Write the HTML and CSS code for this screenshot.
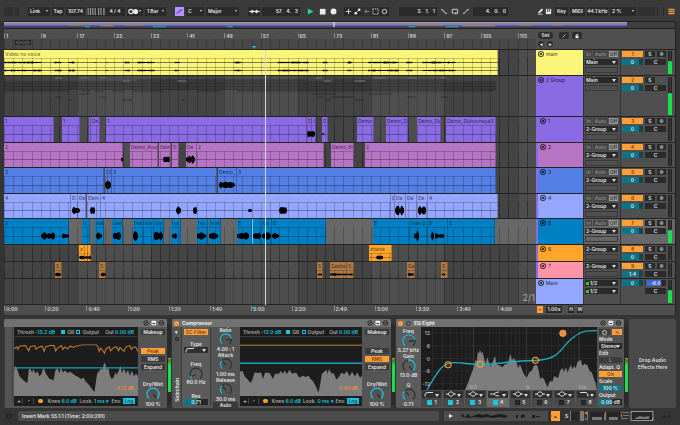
FILE: index.html
```
<!DOCTYPE html>
<html lang="en">
<head>
<meta charset="utf-8">
<title>Arrangement</title>
<link rel="stylesheet" href="styles.css">
</head>
<body>
<svg class="defs" width="0" height="0" aria-hidden="true">
  <symbol id="knob-high" viewBox="0 0 14 14"><path class="ring" d="M3 11.5A6 6 0 1 1 11 11.5"/><path class="arc" d="M3 11.5A6 6 0 1 1 12.8 6"/><path class="hand" d="M7 7.5L12 6.5"/></symbol>
  <symbol id="knob-full" viewBox="0 0 14 14"><path class="arc" d="M3 11.5A6 6 0 1 1 11 11.5"/><path class="hand" d="M7 7L10.5 11"/></symbol>
  <symbol id="knob-low" viewBox="0 0 14 14"><path class="ring" d="M3 11.5A6 6 0 1 1 11 11.5"/><path class="arc" d="M3 11.5A6 6 0 0 1 1.5 9"/><path class="hand" d="M7 7.5L2.5 9.5"/></symbol>
  <symbol id="knob-mid" viewBox="0 0 14 14"><path class="ring" d="M3 11.5A6 6 0 1 1 11 11.5"/><path class="arc" d="M3 11.5A6 6 0 0 1 2.5 3"/><path class="hand" d="M7 7.5L3.5 4"/></symbol>
  <symbol id="knob-bi" viewBox="0 0 14 14"><path class="ring" d="M3 11.5A6 6 0 1 1 11 11.5"/><path class="arc" d="M7 1A6 6 0 0 1 11 11.5"/><path class="hand" d="M7 7.5L10.5 11"/><circle class="dot" cx="7" cy="1" r="1"/></symbol>
  <symbol id="bell" viewBox="0 0 10 6"><path d="M0 3H2M8 3H10M2 3Q5-1.5 8 3Q5 7.5 2 3Z"/></symbol>
  <symbol id="lowcut" viewBox="0 0 10 6"><path d="M1 5.5V4Q1 1.5 4 1.5H9"/></symbol>
  <symbol id="shelf" viewBox="0 0 10 6"><path d="M0 3H4Q5 1 9 1M4 3Q5 5 9 5"/></symbol>
  <symbol id="highcut" viewBox="0 0 10 6"><path d="M1 1.5H7Q9 1.5 9 5.5"/></symbol>
  <symbol id="dev-icons" viewBox="0 0 22 6"><circle class="o" cx="3" cy="3" r="2.2"/><path class="o" d="M1.5 4.5L4.5 1.5"/><rect class="f" x="8.5" y=".7" width="4.6" height="4.6" rx="1"/><path class="o" d="M9.5 3.5H12"/><circle class="o" cx="18.5" cy="3" r="2.3"/><path class="o" d="M17 3H20"/></symbol>
</svg>

<header class="toolbar">
  <div class="group g-mode"><span class="dim-box"></span><span class="dim-dot"></span></div>
  <div class="group g-clock">
    <span class="drop"><select aria-label="Link"><option>Link</option></select></span>
    <button>Tap</button>
    <input aria-label="Tempo" value="107.74">
    <button aria-label="Nudge"><svg viewBox="0 0 16 6"><path class="bars" d="M1 0V6M3 0V6M5 0V6M7 0V6M10 0V6M12 0V6M14.5 0V6"/></svg></button>
    <input aria-label="Time signature" value="4 / 4">
    <button class="with-arrow" aria-label="Metronome"><svg viewBox="0 0 9 6"><circle class="line" cx="2.5" cy="3" r="1.8"/><circle class="fill" cx="6.5" cy="3" r="2.2"/></svg></button>
    <span class="drop"><select aria-label="Quantize"><option>1 Bar</option></select></span>
  </div>
  <div class="group g-scale">
    <button class="scale" aria-label="Scale"><svg viewBox="0 0 9 9"><path d="M1.5 7V5.5H4M4.5 5V3H6.5M7 4V2"/></svg></button>
    <span class="drop"><select aria-label="Root"><option>C</option></select></span>
    <span class="drop"><select aria-label="Scale name"><option>Major</option></select></span>
  </div>
  <div class="group g-pos">
    <button aria-label="Follow"><svg viewBox="0 0 11 6"><path class="line" d="M1 3H10"/><path class="fill" d="M3 1L5.5 3L3 5ZM8 1L5.5 3L8 5Z"/></svg></button>
    <input class="num" aria-label="Position" value="57.   4.   3">
  </div>
  <div class="group g-transport">
    <button class="bare play" aria-label="Play"><svg viewBox="0 0 8 8"><path d="M1 .5L7.5 4L1 7.5Z"/></svg></button>
    <button class="bare" aria-label="Stop"><svg viewBox="0 0 8 8"><path class="fill" d="M1 1H7.5V7.5H1Z"/></svg></button>
    <button class="bare" aria-label="Record"><svg viewBox="0 0 8 8"><circle class="fill" cx="4" cy="4" r="3.4"/></svg></button>
  </div>
  <div class="group g-edit">
    <button aria-label="Overdub"><svg viewBox="0 0 8 8"><path class="line" d="M4 1V7M1 4H7"/></svg></button>
    <button aria-label="Automation arm"><svg viewBox="0 0 8 8"><path class="line" d="M2 6L6 2"/><circle class="fill" cx="2" cy="6" r="1.5"/><circle class="fill" cx="6" cy="2" r="1.5"/></svg></button>
    <button class="dim" aria-label="Re-enable"><svg viewBox="0 0 8 8"><path class="line" d="M7 4H2M4 2L2 4L4 6"/></svg></button>
    <button aria-label="Capture"><svg viewBox="0 0 8 8"><path class="line" stroke-dasharray="1.5 1" d="M1 1H7V7H1Z"/></svg></button>
    <button aria-label="Session record"><svg viewBox="0 0 8 8"><circle class="line" cx="4" cy="4" r="2.5"/></svg></button>
  </div>
  <div class="group g-loop">
    <input class="num" aria-label="Loop start" value="3.   1.   1">
    <div class="icons">
      <button aria-label="Punch in"><svg viewBox="0 0 9 8"><path class="line" d="M1 2H3L6 6H8"/></svg></button>
      <button aria-label="Loop"><svg viewBox="0 0 9 8"><path class="line" d="M3 6H1.5V1.5H7.5V6H5M5.5 4.5L4 6L5.5 7.5"/></svg></button>
      <button aria-label="Punch out"><svg viewBox="0 0 9 8"><path class="line" d="M1 6H3L6 2H8"/></svg></button>
    </div>
    <input class="num" aria-label="Loop length" value="4.   0.   0">
  </div>
  <div class="group g-right">
    <div class="icons">
      <button aria-label="Draw"><svg viewBox="0 0 8 8"><path class="fill" d="M1.5 4.5L5.5 .5L7 2L3.5 5.5L1.5 6Z"/><path class="line" d="M1 7H6"/></svg></button>
      <button aria-label="Keyboard"><svg viewBox="0 0 8 8"><path class="fill" d="M1 1H7V7H1Z"/><path class="cut" d="M3 1V4.5M5 1V4.5"/></svg></button>
    </div>
    <button>Key</button>
    <button>MIDI</button>
    <button>44.1 kHz</button>
    <span class="drop"><select aria-label="CPU"><option>2 %</option></select></span>
    <span class="dim-box"></span>
    <span class="ticks"></span>
    <button class="bare menu" aria-label="Menu"><svg viewBox="0 0 8 8"><path d="M.5 1.5H7.5M.5 4H7.5M.5 6.5H7.5"/></svg></button>
  </div>
</header>

<main class="arrangement">
  <div class="overview">
    <svg viewBox="0 0 672 7" preserveAspectRatio="none" aria-hidden="true">
      <path fill="#e6e04a" d="M0 0H624V1H0Z"/><path fill="#8379d8" d="M0 1H624V4H0Z"/><path fill="#4670c4" d="M0 4H624V5H0Z"/>
      <path fill="#ae7f62" d="M64 3H80V4H64ZM120 3H140V4H120ZM410 3H440V4H410ZM515 3H530V4H515ZM550 3H560V4H550Z"/>
      <path fill="#e98d33" d="M96 4H110V5H96ZM458 4H492V5H458Z"/>
      <path fill="#28b98a" d="M81 5H86V6H81ZM149 5H162V6H149ZM223 5H229V6H223ZM405 5H412V6H405ZM442 5H455V6H442Z"/>
      <path fill="#fff" d="M330 0H331V6H330Z"/>
    </svg>
  </div>
  <div class="ruler-row">
    <div class="ruler">
      <div class="bars-scale" id="bars"></div>
      <div class="scrub"><span class="brace"></span><span class="marker"></span></div>
    </div>
    <div class="locators">
      <div><button class="set">Set</button><button aria-label="Draw mode"><svg viewBox="0 0 8 8"><path class="line" d="M2 6L6 2"/></svg></button><button aria-label="Lock"><svg viewBox="0 0 8 8"><path class="fill" d="M2 3.5H6V7H2Z"/><path class="line" d="M3 3.5V2H5V3.5"/></svg></button></div>
      <div><button class="round" aria-label="Previous">◂</button><button class="round" aria-label="Next">▸</button></div>
    </div>
  </div>
  <div class="tracks" id="tracks"><span class="playhead"></span></div>
  <div class="time-row">
    <div class="time-scale" id="times"><span class="marker"></span></div>
    <div class="zoom"><button class="on" aria-label="Automation">+</button><button class="speed">1.00x</button><button>H</button><button>W</button></div>
  </div>
</main>

<section class="devices">
  <article class="device comp first">
    <h2 class="title"><svg class="dev-icons"><use href="#dev-icons"/></svg></h2>
    <div class="body">
      <div class="sliver"></div>
      <div class="screen">
        <div class="readout"><span>Thresh <b>-15.2 dB</b></span><span><i class="sq"></i>GR <i class="sq open"></i>Output</span><span>Out <b>0.00 dB</b></span></div>
        <div class="plot">
          <svg viewBox="0 0 370 180" preserveAspectRatio="none" aria-hidden="true">
            <path class="wave" d="M0 180V105L4 88 10 100 16 118 24 128 32 135 40 140 44 100 48 95 54 108 58 98 64 112 70 104 76 120 82 112 88 92 94 108 100 120 106 128 112 130 118 132 124 100 130 96 136 110 140 92 146 108 152 102 160 110 168 106 176 112 184 118 192 122 200 128 208 124 214 136 220 142 228 152 234 160 240 168 244 140 248 112 254 104 260 96 264 100 268 82 272 78 276 100 282 94 286 118 292 128 298 122 302 108 306 116 312 104 318 88 322 110 328 96 334 112 340 100 346 118 352 102 358 120 364 112 370 118V180Z"/>
            <path class="gr" d="M0 36L8 30 12 38 16 28 34 26 44 42 48 30 62 26 66 38 72 32 84 28 90 44 94 30 108 26 120 26 124 42 130 34 142 26 146 38 152 30 160 36 168 28 178 32 184 28 206 24H246L250 28 254 44 258 34 264 40 270 50 274 36 284 30 288 42 298 32 306 30 312 42 316 32 322 38 328 44 334 30 346 26 350 38 358 30 364 32 370 44"/>
            <path class="thr" d="M0 94H370"/>
          </svg>
          <span class="gain">-3.12 dB</span>
        </div>
        <div class="foot"><span class="mini">⏶</span><span class="mini">◜</span><span class="mini on"></span><span>Knee <b>6.0 dB</b></span><span>Look. <b>1 ms ▾</b></span><span>Env. <button class="log">Log</button></span></div>
      </div>
      <div class="modes"><button>Makeup</button><button class="on gap">Peak</button><button>RMS</button><button>Expand</button><label>Dry/Wet</label><svg class="knob"><use href="#knob-full"/></svg><output>100 %</output></div>
    </div>
  </article>
  <div class="dmeter"><i></i></div>
  <article class="device comp second">
    <h2 class="title"><i class="power"></i>Compressor<svg class="dev-icons"><use href="#dev-icons"/></svg></h2>
    <div class="body">
      <div class="side"><span>▾</span><span class="ring-btn"></span><em>Sidechain</em></div>
      <div class="filter"><button class="on">SC Filter</button><label for="ftype">Type</label><span class="drop"><svg class="fshape"><use href="#lowcut"/></svg><select id="ftype" aria-label="Type"><option></option></select></span><label>Freq</label><svg class="knob"><use href="#knob-low"/></svg><output>80.0 Hz</output><label class="res">Res</label><input class="bar" aria-label="Res" value="0.71"></div>
      <div class="params"><label>Ratio</label><svg class="knob"><use href="#knob-high"/></svg><output>4.00 : 1</output><label>Attack</label><svg class="knob"><use href="#knob-mid"/></svg><output>1.00 ms</output><label>Release</label><svg class="knob"><use href="#knob-mid"/></svg><output>30.0 ms</output><button>Auto</button></div>
      <div class="screen">
        <div class="readout"><span>Thresh <b>-12.0 dB</b></span><span><i class="sq"></i>GR <i class="sq open"></i>Output</span><span>Out <b>0.00 dB</b></span></div>
        <div class="plot">
          <svg viewBox="0 0 370 180" preserveAspectRatio="none" aria-hidden="true">
            <path class="wave" d="M0 180V105L8 104 14 120 22 128 32 140 38 130 44 108 56 110 64 108 70 128 76 108 90 110 100 128 106 112 118 112 124 104 130 112 136 102 142 114 150 100 158 112 170 108 180 124 190 118 200 122 208 118 214 128 222 136 230 150 238 170 244 140 248 112 256 106 262 100 266 112 270 98 278 112 284 110 292 130 300 122 308 108 316 114 324 104 332 120 340 106 348 120 356 108 364 124 370 118V180Z"/>
            <path class="gr" d="M0 25H370"/>
            <path class="thr" d="M0 80H370"/>
          </svg>
          <span class="gain">0.00 dB</span>
        </div>
        <div class="foot"><span class="mini">⏶</span><span class="mini">◜</span><span class="mini on"></span><span>Knee <b>6.0 dB</b></span><span>Look. <b>0 ms ▾</b></span><span>Env. <button class="log">Log</button></span></div>
      </div>
      <div class="modes"><button>Makeup</button><button class="gap">Peak</button><button class="on">RMS</button><button>Expand</button><label>Dry/Wet</label><svg class="knob"><use href="#knob-full"/></svg><output>100 %</output></div>
    </div>
  </article>
  <div class="dmeter"><i></i></div>
  <article class="device eq">
    <h2 class="title"><i class="power"></i><i class="fold"></i>EQ Eight<svg class="dev-icons"><use href="#dev-icons"/></svg></h2>
    <div class="body">
      <div class="params"><label>Freq</label><svg class="knob"><use href="#knob-high"/></svg><output>5.27 kHz</output><label>Gain</label><svg class="knob"><use href="#knob-bi"/></svg><output>13.0 dB</output><label>Q</label><svg class="knob"><use href="#knob-mid"/></svg><output>0.71</output></div>
      <div class="eq-main">
        <div class="eq-plot">
          <svg viewBox="0 0 526 188" preserveAspectRatio="none" aria-hidden="true">
            <path class="grid" d="M0 18H526M0 56H526M0 94H526M0 131H526M0 169H526M34 0V188M65 0V188M89 0V188M107 0V188M122 0V188M135 0V188M146 0V188M205 0V188M234 0V188M255 0V188M270 0V188M283 0V188M294 0V188M362 0V188M390 0V188M410 0V188M426 0V188M439 0V188M450 0V188M459 0V188"/>
            <path class="grid strong" d="M157 0V188M315 0V188M472 0V188"/>
            <path class="wave" d="M131 188L140 168 150 140 157 122 163 98 167 102 170 72 173 80 176 67 180 78 184 74 188 92 193 110 198 90 203 106 208 118 214 104 221 86 226 112 234 114 243 120 250 112 260 108 264 92 268 80 271 98 278 94 286 106 290 122 296 112 306 138 316 152 323 136 332 130 336 118 343 112 348 116 352 132 356 156 362 150 368 156 372 166 378 180 386 160 392 164 398 146 410 152 416 130 423 122 427 134 433 120 438 136 448 112 452 126 458 116 462 124 468 104 478 98 482 116 490 110 498 116 504 132 510 134 516 152 522 168 526 188Z"/>
            <path class="curve" d="M18 188C48 136 62 110 90 107C120 104 140 112 178 112C240 112 260 100 341 100C420 98 418 56 454 32C474 13 490 11 526 11"/>
            <g class="nodes"><circle cx="81" cy="113" r="9"/><circle cx="177" cy="111" r="9"/><circle cx="342" cy="99" r="9"/><circle class="solid" cx="424" cy="19" r="9"/></g>
          </svg>
          <div class="db"><span>12</span><span>6</span><span>0</span><span>-6</span><span>-12</span></div>
          <div class="hz"><span>100</span><span>1k</span><span>10k</span></div>
        </div>
        <div class="bands" id="bands"></div>
      </div>
      <div class="eq-opts"><div class="pair"><button aria-label="Audition"><i class="o-ring"></i></button><button class="on" aria-label="Analyze">∿</button></div><label for="mode">Mode</label><span class="drop"><select id="mode"><option>Stereo</option></select></span><label>Edit</label><button class="off">L</button><label>Adapt. Q</label><button class="on">On</button><label for="scale">Scale</label><input id="scale" class="bar full" value="100 %"><label for="out">Output</label><input id="out" class="bar" value="0.00 dB"></div>
    </div>
  </article>
  <div class="dmeter"><i></i></div>
  <div class="dropzone"><p>Drop Audio Effects Here</p></div>
</section>

<footer class="status">
  <span class="info">i</span>
  <p>Insert Mark 55.1.1 (Time: 2:00:291)</p>
  <div class="clipview"><svg viewBox="0 0 104 10" preserveAspectRatio="none" aria-hidden="true"><path class="fill" d="M5 3L9 5L5 7Z"/><path class="thumb" d="M17 5L19 3 21 6 24 3 27 6 31 4 35 3 39 4 43 3 47 5 51 4 56 3 61 4 64 5 61 7 55 6 49 7 43 6 37 7 31 6 25 7 19 6ZM72 4H74V7H72ZM77 4L80 3 81 6 77 7ZM88 4H91V7H88ZM92 5H96V6H92Z"/></svg></div>
  <button class="hot" aria-label="Track devices">▴</button>
  <span class="solo">S</span>
  <svg class="chain" viewBox="0 0 84 10" aria-hidden="true"><path fill="#262626" d="M1 1H9V9H1ZM20 1H34V9H20ZM37 1H50V9H37ZM62 1H82V9H62Z"/><path fill="#777" d="M0 0H1V10H0ZM10 0H14V10H10ZM17 0H18V10H17ZM34 3H36V9H34ZM51 1H59V2H51ZM53 4H59V5H53ZM51 7H58V8H51ZM22 6H32V9H22ZM39 6H48V9H39ZM65 7L70 5 74 6 79 5V8H65Z"/><path fill="#dc7c35" d="M12 2H13V4H12ZM15 1H17V3H15ZM15 7H16V9H15ZM35 1H36V3H35ZM51 3H52V6H51ZM82 7H83V9H82Z"/><path fill="none" stroke="#ddd" stroke-width=".6" d="M61 .5H83V9.5H61Z"/></svg>
  <span class="tail">▪▸ ▾</span>
</footer>
<script src="app.js"></script>
</body>
</html>
```

FILE: styles.css
```
* { box-sizing: border-box; }

:root {
  --text: #e4e4e4;
  --orange: #ff9f38;
  --cyan: #1cc3dc;
  --teal: #0a7488;
  --field: #2a2a2a;
  --panel: #4f4f4f;
}

body {
  margin: 0;
  background: #343434;
  color: var(--text);
  font: 600 5px/6px Inter, "Liberation Sans", sans-serif;
}

button, input, select {
  margin: 0;
  padding: 0;
  border: 0;
  border-radius: 0;
  min-width: 0;
  font: inherit;
  color: inherit;
  background: var(--field);
  appearance: none;
}

button { text-align: center; white-space: nowrap; }
input { width: 100%; text-align: center; }
svg { display: block; }
.defs { position: absolute; }
.line { fill: none; stroke: var(--text); }
.fill { fill: #eaeaea; }

/* Drop-downs */
.drop { position: relative; display: block; background: var(--field); }
.drop select { display: block; width: 100%; height: 100%; padding-left: 2px; background: none; }
.drop::after, .with-arrow::after {
  content: "";
  position: absolute;
  right: 2px;
  top: 50%;
  margin-top: -1px;
  border: 2px solid transparent;
  border-top: 3px solid #ddd;
  border-bottom: 0;
  pointer-events: none;
}

/* Toolbar */
.toolbar { display: flex; height: 21px; padding: 1px 4px 0; align-items: center; background: #3a3a3a; }
.group { display: grid; gap: 2px; height: 9px; }
.group > * { height: 9px; }
.toolbar svg { height: 7px; margin: auto; }
.g-mode { grid-template-columns: 9px 4px; width: 24px; }
.dim-box, .dim-dot { background: #303030; }
.g-clock { grid-template-columns: 22px 12px 19px 16px 20px 16px 21px; }
.g-scale { grid-template-columns: 9px 18px 33px; margin-left: 9px; }
.g-pos { grid-template-columns: 12px 38px; margin-left: 9px; }
.g-transport { grid-template-columns: 9px 10px 9px; margin-left: 6px; }
.g-edit { grid-template-columns: repeat(5, 9px); gap: 0; margin-left: 6px; }
.g-loop { grid-template-columns: 38px 32px 35px; margin-left: 10px; }
.g-right { grid-template-columns: 17px 13px 15px 21px 26px 17px 7px 10px; margin-left: auto; }
.toolbar .drop::after, .toolbar .with-arrow::after { border-width: 2px 1px 0; }
.with-arrow { position: relative; }
.toolbar .with-arrow svg { margin: 0 1px; }
.icons { display: flex; justify-content: space-around; }
.icons button { flex: 1; background: none; }
.g-edit button { background: var(--field); }
.dim { opacity: .5; }
.num { white-space: pre; text-align: right; padding-right: 2px; }
.bars { stroke: #9a9a9a; stroke-width: 1; }
.scale { background: #b295ff; }
.scale path { fill: none; stroke: #3c2a70; }
.bare { background: none; }
.play path { fill: #1fd58c; }
.cut { stroke: #333; }
.ticks { border: 1px solid #2a2a2a; border-width: 0 1px; }
.menu path { stroke: var(--orange); stroke-width: 1.5; }

/* Arrangement */
.arrangement { margin: 0 4px; background: var(--panel); border-right: 1px solid #222; border-radius: 2px; }
.overview { height: 8px; background: #3f3f3f; border: 1px solid #1f1f1f; border-width: 1px 0; }
.overview svg { width: 100%; height: 6px; }
.ruler-row, .time-row { display: grid; grid-template-columns: minmax(0, 1fr) 139px; }
.ruler-row { height: 21px; border-bottom: 1px solid #222; }
.bars-scale { display: grid; grid-template-columns: repeat(14, 4fr) 2fr; height: 10px; padding-top: 4px; }
.bars-scale span, .time-scale span:not(.marker) { border-left: 1px solid #8a8a8a; height: 5px; padding-left: 1px; color: #d4d4d4; }
.scrub {
  position: relative;
  height: 10px;
  background: repeating-linear-gradient(to right, #3b3b3b 0 1px, transparent 1px calc(100% / 58)), #484848;
}
.brace { position: absolute; left: 2%; top: 1px; width: 3%; height: 5px; border: 1px dashed #222; }
.marker { position: absolute; left: 46.6%; bottom: 0; border: 2px solid transparent; border-top: 3px solid var(--cyan); border-bottom: 0; }
.locators { padding: 3px 0 0 2px; }
.locators div { display: flex; gap: 3px; height: 9px; }
.locators button { width: 10px; height: 7px; border-radius: 2px; background: #2e2e2e; line-height: 7px; }
.locators svg { height: 6px; margin: auto; }
.locators .set { width: 15px; margin-right: 3px; border-radius: 4px; }
.locators .round { width: 6px; height: 6px; border-radius: 3px; line-height: 6px; }

.tracks { position: relative; }
.track {
  display: grid;
  grid-template-columns: minmax(0, 1fr) 47px 37px 47px 8px;
  border-bottom: 1px solid #232323;
}
.lane {
  position: relative;
  overflow: hidden;
  background:
    repeating-linear-gradient(to right, rgba(0, 0, 0, .2) 0 1px, transparent 1px calc(100% / 58)),
    repeating-linear-gradient(to right, #444 0 calc(100% * 8 / 58), #4e4e4e calc(100% * 8 / 58) calc(100% * 16 / 58));
}
.track.selected .lane { background: #676767; }
.track.selected { background: #676767; }
.clip {
  position: absolute;
  top: 0;
  bottom: 0;
  overflow: hidden;
  padding-left: 1px;
  line-height: 8px;
  font-weight: 500;
  white-space: nowrap;
  color: rgba(0, 0, 0, .6);
  border-right: 1px solid rgba(0, 0, 0, .25);
}
.clip::after {
  content: "";
  position: absolute;
  inset: 8px 0 0;
  border-top: 1px solid rgba(0, 0, 0, .2);
  background: linear-gradient(rgba(0, 0, 0, .3), rgba(0, 0, 0, .3)) center / 100% 1px no-repeat;
}
.lane-grid {
  position: absolute;
  inset: 8px 0 0;
  background: repeating-linear-gradient(to right, rgba(0, 0, 0, .2) 0 1px, transparent 1px calc(100% / 58));
}
.waves { position: absolute; inset: 0; width: 100%; height: 100%; }
.playhead { position: absolute; z-index: 2; top: 0; bottom: 0; left: 38.9%; width: 1px; background: #d6d6d6; }
.insert { position: absolute; top: 0; bottom: 0; left: 46.7%; width: 1px; background: #7cc8ea; }
.corner { position: absolute; right: 1px; bottom: 2px; font-size: 9px; line-height: 8px; font-weight: 400; color: #aaa; }

.c-yellow { background: #fbf679; }
.c-purple { background: #8b6be4; }
.c-pink { background: #b674c5; }
.c-blue { background: #5480e6; }
.c-peri { background: #95a6ff; }
.c-sea { background: #0080c4; }
.c-amber { background: #ffa529; }
.c-brown { background: #ad7a46; }
.c-rose { background: #ff94a8; }

.head { display: flex; gap: 2px; padding: 1px 2px 0; color: rgba(0, 0, 0, .72); font-weight: 500; white-space: nowrap; }
.child .head { border-left: 2px solid #8b6be4; }
.fold-btn { width: 6px; height: 6px; border: 1px solid rgba(0, 0, 0, .7); border-radius: 3px; background: radial-gradient(rgba(0, 0, 0, .7) 1px, transparent 1px); }
.io, .mix { display: grid; align-content: start; gap: 2px; padding: 1px 2px 0 1px; border-left: 1px solid #333; }
.io > * { height: 6px; }
.monitor { display: grid; grid-template-columns: 7px 1fr 9px; gap: 1px; }
.monitor button { background: #454545; color: #888; }
.monitor .sel { background: #999; color: #333; }
.io .drop select { padding-left: 1px; }
.io .blank { border: 1px solid #3a3a3a; }
.io .lit select { padding-left: 5px; }
.io .lit::before { content: ""; position: absolute; left: 1px; top: 2px; width: 3px; height: 3px; background: #43c02f; }
.mix { grid-template-columns: 21px 10px 9px; gap: 2px 2px; padding-right: 0; }
.mix > * { height: 6px; }
.mix .act { background: var(--orange); color: #70401a; }
.mix .rec { color: #888; }
.mix .pan { grid-column: 2 / 4; }
.mix .vol { background: linear-gradient(to right, var(--teal) 80%, #20424a 80%); }
.mix .cue { background: linear-gradient(to right, #2a2a2a 5%, #3c68d0 5% 75%, #2a2a2a 75%); }
.mix .second { grid-column: 2 / 4; }
.meter { position: relative; display: flex; align-items: flex-end; width: 4px; margin: 1px 0 1px 1px; background: linear-gradient(to right, #252525 1px, #333 1px 3px, #252525 3px); }
.meter i { width: 100%; background: #1be04b; border-top: 1px solid #1ba6a0; }

.time-row { height: 10px; }
.time-scale { position: relative; display: grid; grid-template-columns: repeat(12, 412fr) 376fr; padding-top: 1px; }
.time-scale .marker { bottom: 5px; }
.zoom { display: flex; gap: 3px; padding: 1px; }
.zoom button { width: 6px; height: 7px; line-height: 7px; }
.zoom .speed { width: 16px; margin-right: 3px; }

.on, .zoom .on { background: var(--orange); color: #75431a; }

/* Devices */
.devices { display: flex; height: 89px; margin: 4px 4px 0; }
.device { background: #545454; border-radius: 2px; overflow: hidden; display: flex; flex-direction: column; }
.comp.first { flex: 163 0 0; }
.comp.second { flex: 219 0 0; }
.eq { flex: 228 0 0; }
.device .title { display: flex; align-items: center; gap: 3px; height: 8px; margin: 0; padding: 0 2px; background: #717171; font-size: 5px; color: #eee; flex: none; }
.dev-icons { width: 22px; height: 6px; margin-left: auto; }
.dev-icons .o, .o { fill: none; stroke: #2a2a2a; }
.f { fill: #eee; }
.power { width: 5px; height: 5px; border-radius: 3px; background: var(--orange); }
.fold { width: 5px; height: 5px; border: 1px solid #333; border-radius: 3px; }
.body { display: flex; flex: 1; min-height: 0; padding-bottom: 2px; }
.sliver { width: 10px; background: linear-gradient(to right, #3c3c3c 1px, transparent 1px 8px, #444 8px 9px, transparent 9px); }
.screen { flex: 1; display: flex; flex-direction: column; background: #1d1d1d; color: #a5a5a5; min-width: 0; }
.screen b { color: var(--cyan); font-weight: 600; }
.readout, .foot { display: flex; justify-content: space-between; align-items: center; height: 10px; padding: 0 4px 0 3px; white-space: nowrap; }
.readout { border-bottom: 1px solid #383838; }
.foot { gap: 1px; padding: 0 3px 0 1px; }
.mini { width: 8px; text-align: center; border-right: 1px solid #444; }
.mini.on { height: 4px; width: 5px; margin: 0 2px; border: 0; border-radius: 2px; }
.sq { display: inline-block; width: 4px; height: 4px; margin: 0 2px 0 0; background: var(--cyan); }
.sq.open { background: none; border: 1px solid var(--cyan); margin-left: 1px; }
.log { width: 12px; background: var(--cyan); color: #154c58; }
.plot { position: relative; flex: 1; min-height: 0; }
.plot svg, .eq-plot svg { position: absolute; inset: 0; width: 100%; height: 100%; }
.wave { fill: #7d7d7d; }
.gr { fill: none; stroke: #cc7d34; stroke-width: 3; }
.thr { fill: none; stroke: #199fb3; stroke-width: 4; }
.gain { position: absolute; right: 4px; bottom: 5px; color: #e08d3d; }
.modes { display: flex; flex-direction: column; align-items: center; gap: 2px; width: 29px; padding: 2px 2px 0 3px; }
.modes button { width: 100%; height: 6px; background: #3a3a3a; }
.modes button.on { background: var(--orange); }
.modes .gap { margin-top: 11px; }
.modes label { margin-top: 9px; }
.modes .knob, .modes output, .modes label { margin-bottom: -2px; white-space: nowrap; }
.knob { width: 14px; height: 14px; flex: none; }
.ring, .arc, .hand { fill: none; stroke: #303030; stroke-width: 1.3; }
.arc { stroke: var(--cyan); }
.dot { fill: var(--cyan); }
.dmeter { width: 4px; margin: 5px 1px 3px 0; padding: 0 0 13px 1px; background: #2a2a2a; display: flex; align-items: flex-end; }
.dmeter i { width: 100%; height: 50%; background: linear-gradient(#3b8a2a 3px, #1be04b 6px); border-top: 1px solid #b78b2f; }

.side { display: flex; flex-direction: column; align-items: center; width: 10px; gap: 2px; padding-top: 2px; border-right: 1px solid #3c3c3c; }
.ring-btn { width: 4px; height: 4px; border: 1px solid #222; border-radius: 2px; }
.side em { margin-top: auto; padding: 4px 0; writing-mode: vertical-rl; transform: rotate(180deg); font-style: normal; }
.filter, .params { display: flex; flex-direction: column; align-items: center; padding: 1px 2px 0; white-space: nowrap; }
.filter { width: 29px; border-right: 1px solid #3c3c3c; background: #5c5c5c; }
.filter > button { width: 100%; height: 6px; margin: 1px 0 6px; }
.filter .drop { width: 100%; height: 6px; margin: 0 0 8px; background: #303030; }
.fshape { position: absolute; left: 1px; top: 0; width: 10px; height: 6px; fill: none; stroke: #ddd; }
.filter .knob { margin: 0 0 -2px; }
.filter .res { margin-top: 8px; }
.bar { height: 6px; background: linear-gradient(to right, var(--teal) 55%, #262626 55%); }
.bar.full { background: var(--teal); }
.second .params { width: 29px; padding-top: 0; }
.second .params .knob { height: 13px; }
.second .params button { width: 100%; background: #3a3a3a; }

.eq .params { width: 25px; padding: 1px 1px 0; background: #5c5c5c; }
.eq .params .knob { margin: 0 0 -1px; }
.eq .params output:nth-of-type(2) { margin-bottom: 4px; }
.eq-main { flex: 1; display: flex; flex-direction: column; min-width: 0; }
.eq-plot { position: relative; flex: 1; background: #1d1d1d; }
.grid { fill: none; stroke: #303030; stroke-width: 2; }
.strong { stroke: #484848; }
.curve { fill: none; stroke: #20aabb; stroke-width: 4; }
.nodes circle { fill: rgba(255, 159, 56, .1); stroke: var(--orange); stroke-width: 3; }
.nodes .solid { fill: #e29040; }
.db { position: absolute; inset: 3px auto 3px 1px; width: 8px; display: flex; flex-direction: column; justify-content: space-between; text-align: right; color: #bbb; font-weight: 500; }
.hz { position: absolute; left: 27%; right: 6%; bottom: 0; display: flex; justify-content: space-between; color: #aaa; font-weight: 500; }
.bands { display: grid; grid-template-columns: repeat(8, 1fr); gap: 1px; height: 16px; }
.band { padding: 1px; background: #4a4a4a; }
.band.current { background: #6c6c6c; }
.band .drop { height: 7px; background: #2f2f2f; }
.band .fshape { left: 2px; }
.band label { display: flex; align-items: center; justify-content: space-around; height: 8px; padding: 0 3px; }
.band input { width: 5px; height: 5px; background: #2c2c2c; border: 1px solid #222; }
.band input:checked { background: var(--cyan); border-color: var(--cyan); }
.eq-opts { display: flex; flex-direction: column; width: 27px; padding: 2px; gap: 1px; white-space: nowrap; }
.eq-opts > *, .pair button { height: 6px; flex: none; }
.eq-opts > button, .pair button { background: #3c3c3c; }
.pair { display: grid; grid-template-columns: 1fr 1fr; gap: 2px; }
.eq-opts .on { background: var(--orange); }
.eq-opts .off { color: #999; }
.o-ring { display: block; width: 5px; height: 5px; margin: auto; border: 1px solid #ccc; border-radius: 3px; }
.dropzone { flex: 47 0 0; display: grid; place-items: center; text-align: center; line-height: 7px; background: #4a4a4a; border-radius: 2px; color: #ddd; }
.dropzone p { width: 34px; margin: 0; }

/* Status bar */
.status { display: flex; align-items: center; height: 10px; margin: 3px 4px 4px; }
.info { width: 6px; height: 6px; margin: 0 6px 0 2px; border-radius: 3px; background: #222; color: #555; text-align: center; }
.status p { flex: 1; height: 10px; margin: 0 5px 0 0; padding: 0 4px; line-height: 10px; background: #4c4c4c; border-radius: 2px; }
.clipview { width: 104px; height: 10px; background: #4c4c4c; }
.clipview svg { width: 104px; height: 10px; }
.thumb { fill: #1c1c1c; }
.hot { width: 9px; height: 10px; margin: 0 5px 0 3px; background: var(--orange); color: #5a3410; }
.solo { width: 5px; }
.chain { width: 84px; height: 10px; }
.tail { width: 22px; padding-left: 7px; color: #222; white-space: nowrap; }
```

FILE: app.js
```
// Lane positions run from 0 to LANE; they are turned into percentages when drawn.
const LANE = 532;
const pct = v => (v / LANE * 100).toFixed(3) + '%';

const tracks = [
  { name: 'main', color: 'yellow', height: 26, monitor: true, out: 'Main', level: 55,
    clips: [[0, 494, 'Video no voice']], stereo: true },
  { name: '2 Group', color: 'purple', height: 41, out: 'Main', level: 57, noRec: true, group: true, clips: [] },
  { name: '1', color: 'purple', height: 26, child: true, monitor: true, out: '2-Group',
    clips: [[0, 50, '1'], [58, 76, '1'], [85, 87, ''], [87, 96, 'De'], [102, 303, '1'], [303, 308, 'D'], [308, 312, '('], [318, 324, 'D'], [353, 370, 'Demo'], [382, 404, 'Demo_Du'], [413, 437, 'Demo_Du'], [442, 492, 'Demo_Duhovnaya3']],
    waves: [[303, 311, 5], [318, 320, 2]] },
  { name: '2', color: 'pink', height: 25, child: true, monitor: true, out: '2-Group',
    clips: [[0, 119, '2'], [126, 154, 'Demo_Kouo'], [155, 167, 'Dem'], [168, 175, 'D'], [182, 193, 'De'], [193, 320, '2'], [327, 350, 'Demo_Ko'], [361, 492, '2']],
    waves: [[117, 119, 6], [159, 166, 5], [182, 187, 7], [187, 191, 7]] },
  { name: '3', color: 'blue', height: 26, child: true, monitor: true, out: '2-Group',
    clips: [[0, 100, '3'], [101, 104, '('], [104, 108, 'D'], [108, 213, '3'], [214, 233, 'Demo_'], [233, 492, '3']],
    waves: [[101, 107, 8], [215, 231, 6]] },
  { name: '4', color: 'peri', height: 25, child: true, monitor: true, out: '2-Group',
    clips: [[0, 67, '4'], [67, 74, 'D'], [74, 82, 'De'], [83, 97, 'Dem'], [97, 387, '4'], [387, 391, 'D'], [391, 402, 'De'], [402, 413, 'De'], [413, 424, 'De'], [424, 494, '4']],
    waves: [[68, 76, 6], [86, 91, 8], [172, 177, 8], [189, 193, 8], [244, 248, 3], [275, 283, 6], [391, 396, 8], [396, 400, 9], [414, 422, 8]] },
  { name: '5', color: 'sea', height: 26, child: true, monitor: true, selected: true, out: '2-Group', level: 58,
    clips: [[0, 65, '5'], [78, 86, 'Iv'], [91, 100, 'Iva'], [108, 119, 'Ivan'], [129, 140, 'Ivan'], [140, 150, 'Iva'], [150, 160, 'Iva'], [167, 177, 'Iva'], [193, 204, 'Iva'], [205, 217, 'Ivan'], [233, 248, '5'], [248, 257, ''], [257, 268, 'Iva'], [268, 322, '5'], [369, 406, '5'], [406, 424, 'Ivan p'], [424, 444, '5'], [444, 491, '5']],
    waves: [[37, 43, 6], [43, 51, 6], [58, 65, 4], [92, 98, 6], [109, 117, 8], [129, 134, 8], [150, 159, 9], [168, 173, 6], [193, 202, 6], [205, 214, 6], [233, 245, 6], [249, 257, 6], [258, 267, 7], [268, 275, 6], [410, 412, 9], [412, 415, 9], [427, 430, 8], [431, 435, 7], [435, 440, 5]] },
  { name: '6', color: 'amber', height: 17, child: true, out: '2-Group',
    clips: [[75, 81, 'z'], [81, 84, ''], [84, 87, ''], [365, 388, 'zhana']],
    waves: [[75, 81, 8], [81, 84, 8], [84, 87, 8], [372, 379, 8]] },
  { name: '7', color: 'rose', clipColor: 'brown', height: 17, child: true, out: '2-Group', volume: '1.4',
    clips: [[51, 58, 'S'], [95, 102, 'S'], [313, 319, 'S'], [326, 343, 'Sasha'], [343, 350, 'S'], [403, 411, 'Sa'], [437, 444, 'S']],
    waves: [[51, 57, 8], [97, 102, 8], [314, 318, 6], [326, 349, 5], [404, 410, 8], [438, 441, 6]] },
  { name: 'Main', color: 'peri', height: 26, master: true, level: 56, clips: [] }
];

// Small repeatable noise source for waveform outlines.
let seed = 7;
const noise = () => (seed = (seed * 16807) % 2147483647) / 2147483647;

function blob([from, to, amp], mid, scale) {
  const up = [], down = [];
  for (let x = from; x <= to; x += 1) {
    const edge = x === from || x === to ? 0.35 : 1;
    const a = amp * scale * edge * (0.45 + noise() * 0.55);
    up.push(`${x} ${(mid - a).toFixed(1)}`);
    down.unshift(`${x} ${(mid + a).toFixed(1)}`);
  }
  return `M${up.concat(down).join('L')}Z`;
}

function stereoPath() {
  const loud = [[0, 38], [50, 58], [64, 71], [90, 92], [102, 104], [120, 126], [133, 151], [170, 176], [230, 238], [273, 305], [318, 324], [343, 348], [364, 395], [402, 409], [418, 452]];
  let d = '';
  for (const mid of [12.5, 20.5]) {
    d += `M0 ${mid - 0.2}H494V${mid + 0.2}H0Z`;
    for (const [a, b] of loud) d += blob([a, b, 0.9], mid, 1);
  }
  return d;
}

function groupShapes() {
  const bar = (y, list, h = 2) => list.map(([a, b]) => `M${a} ${y}H${b}V${y + h}H${a}Z`).join('');
  const dark = bar(5, [[0, 492]], 9)
    + bar(3, [[133, 303], [195, 200], [330, 442]], 2)
    + bar(14, [[0, 65], [78, 86], [91, 100], [108, 119], [129, 160], [193, 217], [233, 322], [322, 490]])
    + bar(17, [[75, 86], [309, 332], [365, 388]])
    + bar(20, [[51, 58], [95, 102], [313, 319], [327, 350], [403, 411], [437, 444]])
    + bar(23, [[64, 68], [118, 128], [177, 181], [321, 327], [350, 360]]);
  const light = bar(1, [[51, 58], [76, 85], [96, 102], [312, 318], [370, 382], [404, 413], [437, 442]])
    + bar(4, [[119, 126], [174, 182], [320, 327], [350, 361]]);
  const rows = bar(7, [[0, 492]], 1) + bar(10, [[0, 492]], 1) + bar(13, [[0, 492]], 1);
  return `<path fill="rgba(0,0,0,.17)" d="${dark}"/><path fill="rgba(0,0,0,.12)" d="${rows}"/><path fill="#5a5a5a" d="${light}"/>`;
}

function laneHTML(t) {
  const h = t.height - 1;
  const clips = t.clips.map(([a, b, name]) =>
    `<div class="clip c-${t.clipColor || t.color}" style="left:${pct(a)};width:${pct(b - a)}">${name}</div>`).join('');
  let shapes = '';
  if (t.stereo) shapes = `<path d="${stereoPath()}"/>`;
  else if (t.group) shapes = groupShapes();
  else if (t.waves) {
    const mid = 8 + (h - 8) / 2;
    const scale = h < 20 ? 0.25 : 0.62;
    shapes = `<path d="${t.waves.map(w => blob(w, mid + 0.5, scale)).join('')}"/>`;
  }
  return `<div class="lane">${clips}${t.clips.length ? '<span class="lane-grid"></span>' : ''}
    <svg class="waves" viewBox="0 0 ${LANE} ${h}" preserveAspectRatio="none" aria-hidden="true">${shapes}</svg>
    ${t.selected ? '<span class="insert"></span>' : ''}${t.master ? '<span class="corner">2/1</span>' : ''}</div>`;
}

function ioHTML(t) {
  const drop = (value, cls = '') => `<span class="drop ${cls}"><select aria-label="${t.name} output"><option>${value}</option></select></span>`;
  if (t.master) return drop('1/2', 'lit') + drop('1/2', 'lit');
  const monitor = t.monitor ? '<div class="monitor"><button>In</button><button>Auto</button><button class="sel">Off</button></div>' : '';
  return monitor + drop(t.out) + '<span class="blank"></span>';
}

function mixHTML(t, i) {
  if (t.master) {
    return `<input class="vol" aria-label="Main volume" value="0"><input class="pan cue" aria-label="Cue volume" value="-6.0"><input class="second" aria-label="Main pan" value="C">`;
  }
  return `<button class="act">${i + 1}</button><button>S</button>${t.noRec ? '<span></span>' : '<button class="rec" aria-label="Arm">●</button>'}
    <input class="vol" aria-label="${t.name} volume" value="${t.volume || 0}"><input class="pan" aria-label="${t.name} pan" value="C">`;
}

document.getElementById('tracks').insertAdjacentHTML('beforeend', tracks.map((t, i) => `
  <div class="track ${t.child ? 'child' : ''} ${t.selected ? 'selected' : ''}" style="height:${t.height}px">
    ${laneHTML(t)}
    <div class="head c-${t.color}"><button class="fold-btn" aria-label="Fold ${t.name}"></button>${t.name}</div>
    <div class="io">${ioHTML(t)}</div>
    <div class="mix">${mixHTML(t, i)}</div>
    <div class="meter">${t.level ? `<i style="height:${t.level}%"></i>` : ''}</div>
  </div>`).join(''));
// Overlay position of the playhead follows the lane width, not the full row.
const playhead = document.querySelector('.playhead');
const placePlayhead = () => {
  const lane = document.querySelector('.lane');
  playhead.style.left = Math.round(lane.clientWidth * 261 / LANE) + 'px';
};
placePlayhead();
addEventListener('resize', placePlayhead);

document.getElementById('bars').innerHTML =
  Array.from({ length: 15 }, (_, i) => `<span>${i * 8 + 1}</span>`).join('');

document.getElementById('times').insertAdjacentHTML('beforeend',
  Array.from({ length: 13 }, (_, i) => `<span>${Math.floor(i / 3)}:${i % 3 ? i % 3 * 20 : '00'}</span>`).join(''));

const shapes = ['lowcut', 'bell', 'bell', 'shelf', 'bell', 'bell', 'bell', 'highcut'];
document.getElementById('bands').innerHTML = shapes.map((s, i) => `
  <div class="band ${i === 3 ? 'current' : ''}">
    <span class="drop"><svg class="fshape"><use href="#${s}"/></svg><select aria-label="Band ${i + 1} type"><option></option></select></span>
    <label><input type="checkbox" ${i < 4 ? 'checked' : ''}>${i + 1}</label>
  </div>`).join('');
```
